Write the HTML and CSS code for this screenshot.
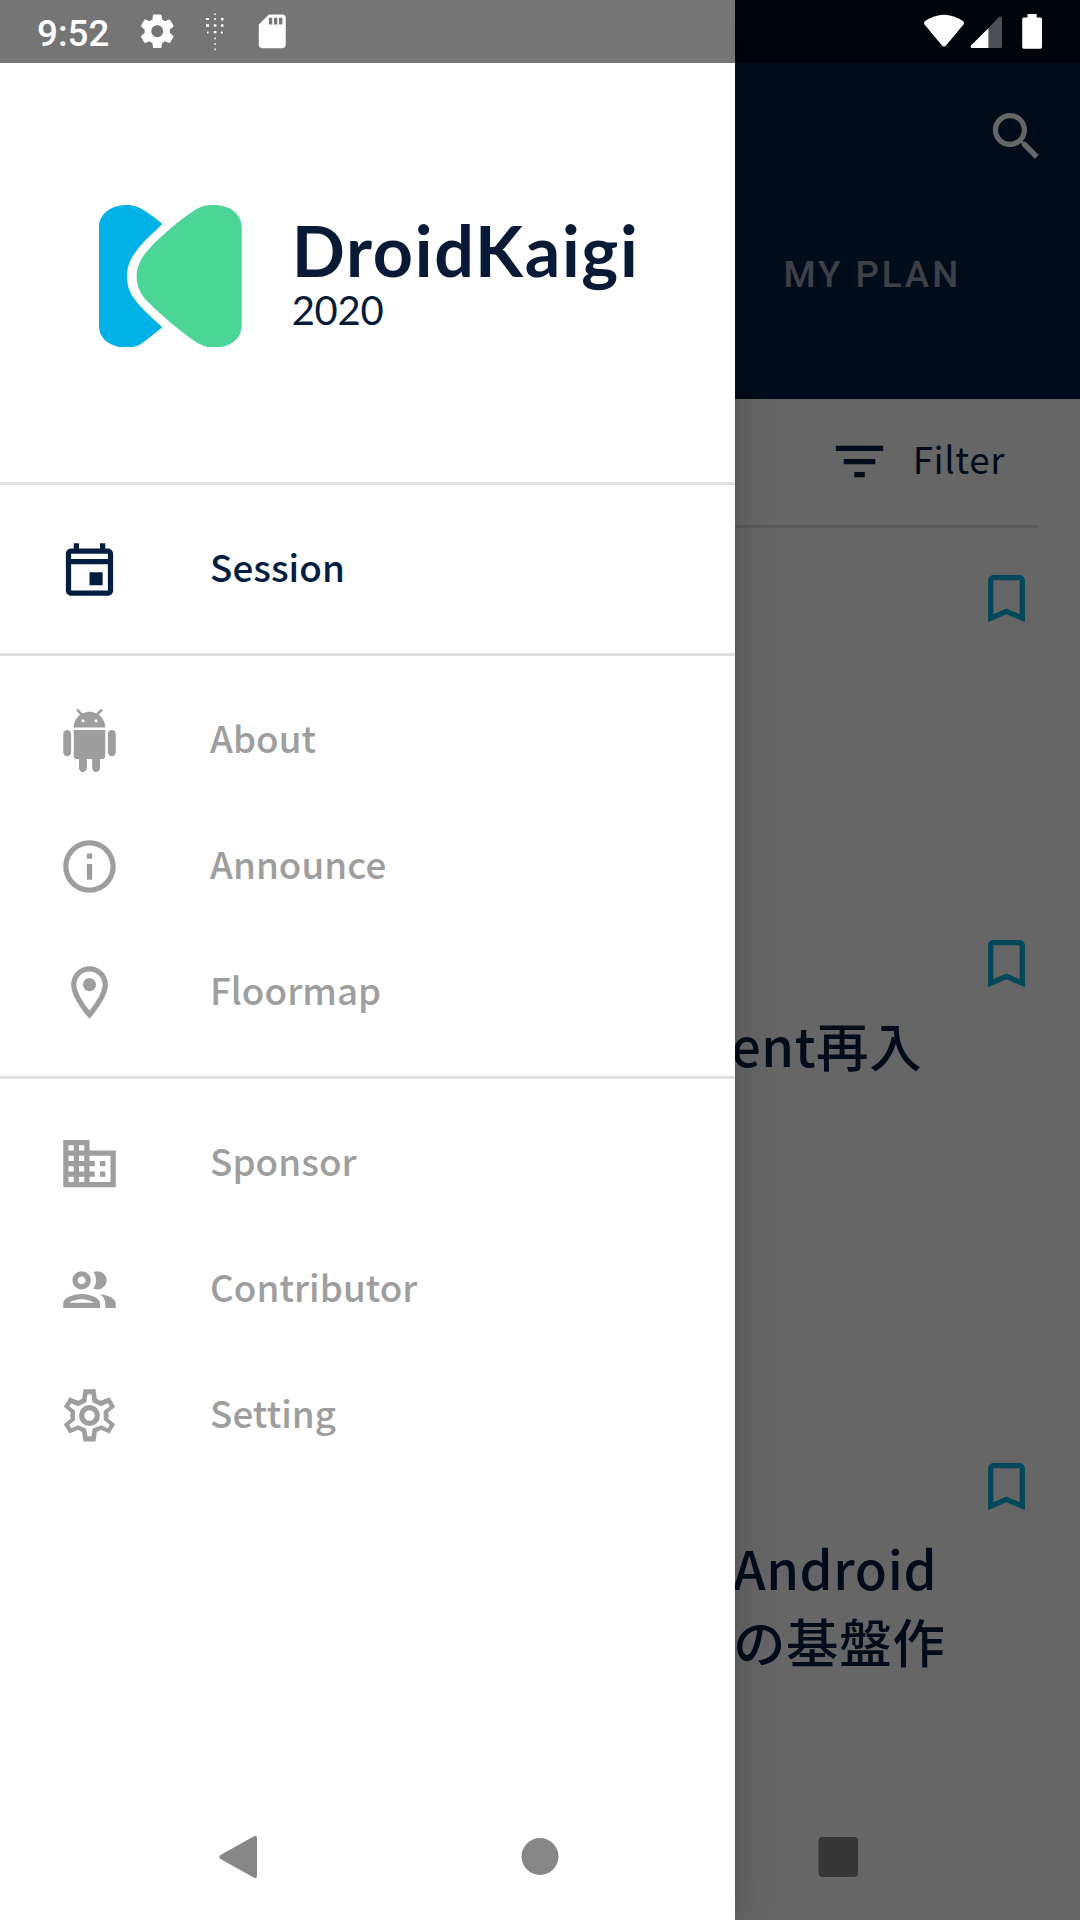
FILE: index.html
```html
<!DOCTYPE html>
<html lang="ja">
<head>
<meta charset="utf-8">
<title>DroidKaigi 2020</title>
<link rel="stylesheet" href="styles.css">
</head>
<body>
<div class="screen">
  <main class="app">
    <header class="appbar">
      <div class="toolbar">
        <svg class="icon" viewBox="0 0 24 24"><path d="M15.5 14h-.79l-.28-.27C15.41 12.59 16 11.11 16 9.5 16 5.91 13.09 3 9.5 3S3 5.91 3 9.5 5.91 16 9.5 16c1.61 0 3.09-.59 4.23-1.57l.27.28v.79l5 4.99L20.49 19l-4.99-5zm-6 0C7.01 14 5 11.99 5 9.5S7.01 5 9.5 5 14 7.01 14 9.5 11.99 14 9.5 14z"/></svg>
      </div>
      <div class="tabs"><span class="tab">MY PLAN</span></div>
    </header>
    <div class="filter-row">
      <svg class="icon" viewBox="0 0 24 24"><path d="M10 18h4v-2h-4v2zM3 6v2h18V6H3zm3 7h12v-2H6v2z"/></svg>
      <span class="filter-label">Filter</span>
    </div>
    <section class="session session-first">
      <svg class="icon bookmark" viewBox="0 0 24 24"><path d="M17 3H7c-1.1 0-2 .9-2 2v16l7-3 7 3V5c0-1.1-.9-2-2-2zm0 15l-5-2.18L7 18V5h10v13z"/></svg>
    </section>
    <section class="session session-second">
      <svg class="icon bookmark" viewBox="0 0 24 24"><path d="M17 3H7c-1.1 0-2 .9-2 2v16l7-3 7 3V5c0-1.1-.9-2-2-2zm0 15l-5-2.18L7 18V5h10v13z"/></svg>
      <h2 class="title title-fragment">ent再入</h2>
    </section>
    <section class="session">
      <svg class="icon bookmark" viewBox="0 0 24 24"><path d="M17 3H7c-1.1 0-2 .9-2 2v16l7-3 7 3V5c0-1.1-.9-2-2-2zm0 15l-5-2.18L7 18V5h10v13z"/></svg>
      <h2 class="title">Android<br>の基盤作</h2>
    </section>
  </main>

  <div class="scrim"></div>

  <aside class="drawer">
    <div class="brand">
      <svg class="mark" viewBox="57 44 428 428">
        <path fill="#02b1e5" d="M57 110C57 70 95 44 138 44C165 44 180 52 195 62C215 75 230 87 247 101C220 128 195 148 172 178C150 205 141 230 141 258C141 290 150 310 170 335C190 360 220 385 247 411C230 425 212 440 195 452C180 464 165 472 138 472C95 472 57 448 57 408Z"/>
        <path fill="#4bd697" d="M402 44C450 44 485 72 485 110V406C485 445 450 472 402 472C375 472 360 463 340 450C300 422 240 372 202 333C180 310 170 288 170 258C170 230 182 205 200 184C235 142 300 88 345 59C362 48 378 44 402 44Z"/>
      </svg>
      <div class="brand-text">
        <span class="brand-name">DroidKaigi</span>
        <span class="brand-year">2020</span>
      </div>
    </div>
    <nav>
      <ul class="group">
        <li class="item item-active">
          <svg class="icon" viewBox="0 0 24 24"><path fill-rule="evenodd" d="M6 2h2v2h8V2h2v2h1c1.1 0 2 .9 2 2v14c0 1.100-.9 2-2 2H5c-1.100 0-2-.9-2-2V6c0-1.100.9-2 2-2h1zM5 6v2h14V6zM5 10v10h14V10zM12 13h5v5h-5z"/></svg>
          <span class="label">Session</span>
        </li>
      </ul>
      <ul class="group">
        <li class="item">
          <svg class="icon" viewBox="0 0 24 24"><path d="M6 18c0 .55.45 1 1 1h1v3.5c0 .83.67 1.5 1.5 1.5s1.5-.67 1.5-1.5V19h2v3.5c0 .83.67 1.5 1.5 1.5s1.5-.67 1.5-1.5V19h1c.55 0 1-.45 1-1V8H6v10zM3.5 8C2.670 8 2 8.670 2 9.500v7c0 .83.67 1.500 1.500 1.500S5 17.330 5 16.500v-7C5 8.670 4.330 8 3.500 8zm17 0c-.83 0-1.500.67-1.500 1.500v7c0 .83.67 1.500 1.500 1.500s1.500-.67 1.500-1.500v-7c0-.83-.67-1.500-1.500-1.500zm-4.970-5.840l1.300-1.300c.2-.2.2-.51 0-.71-.2-.2-.51-.2-.71 0l-1.480 1.480C13.850 1.230 12.950 1 12 1c-.96 0-1.860.23-2.660.63L7.850.15c-.2-.2-.51-.2-.71 0-.2.2-.2.51 0 .71l1.310 1.310C6.970 3.260 6 5.010 6 7h12c0-1.990-.97-3.750-2.470-4.840zM10 5H9V4h1v1zm5 0h-1V4h1v1z"/></svg>
          <span class="label">About</span>
        </li>
        <li class="item">
          <svg class="icon" viewBox="0 0 24 24"><path d="M11 7h2v2h-2zm0 4h2v6h-2zm1-9C6.480 2 2 6.480 2 12s4.480 10 10 10 10-4.480 10-10S17.520 2 12 2zm0 18c-4.410 0-8-3.590-8-8s3.590-8 8-8 8 3.590 8 8-3.590 8-8 8z"/></svg>
          <span class="label">Announce</span>
        </li>
        <li class="item">
          <svg class="icon" viewBox="0 0 24 24"><path d="M12 2C8.130 2 5 5.130 5 9c0 5.250 7 13 7 13s7-7.750 7-13c0-3.870-3.130-7-7-7zM7 9c0-2.760 2.240-5 5-5s5 2.240 5 5c0 2.880-2.880 7.190-5 9.880C9.920 16.210 7 11.850 7 9z"/><circle cx="12" cy="9" r="2.500"/></svg>
          <span class="label">Floormap</span>
        </li>
      </ul>
      <ul class="group">
        <li class="item">
          <svg class="icon" viewBox="0 0 24 24"><path d="M12 7V3H2v18h20V7H12zM6 19H4v-2h2v2zm0-4H4v-2h2v2zm0-4H4V9h2v2zm0-4H4V5h2v2zm4 12H8v-2h2v2zm0-4H8v-2h2v2zm0-4H8V9h2v2zm0-4H8V5h2v2zm10 12h-8v-2h2v-2h-2v-2h2v-2h-2V9h8v10zm-2-8h-2v2h2v-2zm0 4h-2v2h2v-2z"/></svg>
          <span class="label">Sponsor</span>
        </li>
        <li class="item">
          <svg class="icon" viewBox="0 0 24 24"><path d="M9 13.750c-2.340 0-7 1.170-7 3.500V19h14v-1.750c0-2.330-4.660-3.500-7-3.500zM4.340 17c.84-.58 2.870-1.250 4.660-1.250s3.820.67 4.660 1.250H4.340zM9 12c1.930 0 3.500-1.570 3.500-3.500S10.930 5 9 5 5.500 6.570 5.500 8.500 7.070 12 9 12zm0-5c.83 0 1.500.67 1.500 1.500S9.830 10 9 10s-1.500-.67-1.500-1.500S8.170 7 9 7zm7.040 6.810c1.160.84 1.960 1.960 1.960 3.440V19h4v-1.750c0-2.020-3.500-3.170-5.960-3.440zM15 12c1.930 0 3.500-1.570 3.500-3.500S16.930 5 15 5c-.54 0-1.040.13-1.500.35.63.89 1 1.980 1 3.150s-.37 2.260-1 3.150c.46.22.96.35 1.500.35z"/></svg>
          <span class="label">Contributor</span>
        </li>
        <li class="item">
          <svg class="icon" viewBox="53.500 791.500 189 189"><path fill-rule="evenodd" d="M130 807H166L170 836L182 842L208 831L225 860L204 877L206 886L204 895L225 912L208 940L182 929L170 936L166 964H130L126 936L114 929L88 940L71 912L92 895L90 886L92 877L71 860L88 831L114 842L126 836ZM142 822L138 846L114 858L93 849L87 858L105 872L104 886L105 900L87 914L93 924L114 915L138 926L142 948H154L157 926L182 915L203 924L209 914L191 900L190 886L191 872L209 858L203 849L182 858L157 846L154 822Z"/><circle cx="148" cy="886" r="23.500" fill="none" stroke="currentColor" stroke-width="16"/></svg>
          <span class="label">Setting</span>
        </li>
      </ul>
    </nav>
  </aside>

  <div class="statusbar">
    <div class="status-left">
      <span class="clock">9:52</span>
      <svg class="gear" viewBox="0 0 24 24"><path d="M19.430 12.980c.04-.32.07-.64.07-.98s-.03-.66-.07-.98l2.110-1.650c.19-.15.24-.42.12-.64l-2-3.460c-.12-.22-.39-.3-.61-.22l-2.490 1c-.52-.4-1.080-.73-1.690-.98l-.38-2.650C14.460 2.180 14.250 2 14 2h-4c-.25 0-.46.18-.49.42l-.38 2.650c-.61.25-1.170.59-1.690.98l-2.490-1c-.23-.09-.49 0-.61.22l-2 3.460c-.13.22-.07.49.12.64l2.110 1.650c-.04.32-.07.65-.07.98s.03.66.07.98l-2.110 1.650c-.19.15-.24.42-.12.64l2 3.460c.12.22.39.3.61.22l2.490-1c.52.4 1.080.73 1.690.98l.38 2.650c.03.24.24.42.49.42h4c.25 0 .46-.18.49-.42l.38-2.650c.61-.25 1.170-.59 1.690-.98l2.490 1c.23.09.49 0 .61-.22l2-3.460c.12-.22.07-.49-.12-.64l-2.110-1.650zM12 15.500c-1.930 0-3.500-1.570-3.500-3.500s1.570-3.500 3.500-3.500 3.500 1.570 3.500 3.500-1.570 3.500-3.500 3.500z"/></svg>
      <svg class="dots" viewBox="0 0 20 40"><path d="M9.300 1.500h1.500v1.500h-1.500zM1 6h3v2h-3zM9.300 6h1.500v2h-1.500zM16 6h2.500v2.500h-2.500zM1 12.300h3v2.500h-3zM8.800 12.300h2.600v2.500h-2.600zM16 12.300h2.500v2.500h-2.500zM2 19.500h1.500v2h-1.500zM8.800 19h2.600v2.300h-2.600zM15.800 19.500h2v2h-2zM9.300 25.500h1.500v1.800h-1.500zM9.300 31h1.500v1.800h-1.500zM9.300 36.500h1.500v1.800h-1.500z"/></svg>
      <svg class="sdcard" viewBox="0 0 24 24"><path d="M18 2h-8L4.020 8 4 20c0 1.100.9 2 2 2h12c1.100 0 2-.9 2-2V4c0-1.100-.9-2-2-2zm-6 6h-2V4h2v4zm3 0h-2V4h2v4zm3 0h-2V4h2v4z"/></svg>
    </div>
    <svg class="status-right" viewBox="920 0 124 63">
      <path d="M924.500 21.500Q944 8 963.500 21.500Q964.500 23 963.500 24.500L946 45.500Q944 47.800 942 45.500L924.500 24.500Q923.500 23 924.500 21.500Z"/>
      <path d="M988.500 48V28L971 45.500Q970 48 972 48Z"/>
      <path opacity=".3" d="M988.500 28L999 17Q1002 15.500 1002 18V46.500Q1002 48 1000.500 48H988.500Z"/>
      <path d="M1027.500 14H1036.700V17.500H1040.500Q1042 17.500 1042 19V47Q1042 48.800 1040.500 48.800H1023.700Q1022.200 48.800 1022.200 47V19Q1022.200 17.500 1023.700 17.500H1027.500Z"/>
    </svg>
  </div>

  <div class="navbar">
    <svg class="nav-back" viewBox="0 0 38 44"><path d="M35 1.200Q38 0 38 3V41Q38 44 35 42.800L1.500 24Q-1 22 1.500 20Z"/></svg>
    <svg class="nav-home" viewBox="0 0 38 44"><circle cx="19" cy="21.500" r="18.500"/></svg>
    <svg class="nav-recent" viewBox="0 0 40 44"><rect x=".5" y="2" width="39.500" height="40" rx="4"/></svg>
  </div>
</div>
</body>
</html>
```

FILE: styles.css
```css
* { box-sizing: border-box; }
body { margin: 0; }
.screen {
  position: relative;
  width: 1080px;
  height: 1920px;
  overflow: hidden;
  background: #fff;
  font-family: "Noto Sans CJK JP", sans-serif;
}
svg { display: block; fill: currentColor; flex: none; }
.icon { width: 63px; height: 63px; }

/* Session list behind the drawer */
.app { color: #041e42; }
.appbar {
  height: 399px;
  padding-top: 105px;
  background: #041e42;
  color: #fff;
}
.toolbar { display: flex; justify-content: flex-end; padding-right: 31.600px; }
.tabs { display: flex; padding: 85px 0 0 783.500px; }
.tab {
  font: 500 36.750px/43px Roboto, sans-serif;
  letter-spacing: 2.900px;
  color: rgba(255, 255, 255, .6);
}
.filter-row {
  display: flex;
  align-items: center;
  justify-content: flex-end;
  width: 1038px;
  height: 129px;
  padding: 0 33px 2px 0;
  gap: 22px;
  border-bottom: 3px solid #e0e0e0;
}
.filter-label { font-size: 36.750px; line-height: 54px; padding-bottom: 7px; letter-spacing: .600px; }
.session { height: 522px; padding-top: 39px; }
.session-first { height: 365px; }
.session-second { height: 523px; }
.bookmark { margin-left: 975px; color: #00b5e2; }
.title {
  margin: 13px 0 0 733px;
  font-size: 52.500px;
  line-height: 73px;
  font-weight: 500;
  letter-spacing: .600px;
  white-space: nowrap;
}
.title-fragment { margin-left: 731px; }
.scrim { position: absolute; inset: 0; background: rgba(0, 0, 0, .6); }

/* Navigation drawer */
.drawer {
  position: absolute;
  inset: 0 auto 0 0;
  width: 735px;
  background: #fff;
  box-shadow: 0 0 40px rgba(0, 0, 0, .2);
}
.brand {
  display: flex;
  height: 482px;
  padding: 204.500px 0 0 99px;
  gap: 50px;
  color: #081a36;
}
.mark { width: 142.700px; height: 142.700px; }
.brand-text { display: flex; flex-direction: column; padding-top: 9px; font-family: Lato, sans-serif; }
.brand-name { font-size: 70px; line-height: 72px; font-weight: 700; letter-spacing: 1.700px; }
.brand-year { font-size: 40px; line-height: 48px; letter-spacing: -.300px; }
.group {
  margin: 0;
  padding: 21px 0;
  list-style: none;
  border-top: 3px solid #e0e0e0;
}
.item {
  display: flex;
  align-items: center;
  height: 126px;
  padding-left: 57.750px;
  gap: 89.250px;
  color: #9e9e9e;
}
.item-active { color: #041e42; }
.label { font-size: 36.750px; line-height: 54px; padding-bottom: 7px; font-weight: 500; letter-spacing: .050px; }

/* System bars */
.statusbar {
  position: absolute;
  inset: 0 0 auto 0;
  display: flex;
  justify-content: space-between;
  height: 63px;
  padding: 0 36px 0 37px;
  background: rgba(0, 0, 0, .54);
  color: #fff;
}
.status-left { display: flex; align-items: center; }
.clock { width: 99.500px; padding-top: 3px; font: 500 36.750px/43px Roboto, sans-serif; }
.gear, .sdcard { width: 40.500px; height: 40.500px; }
.dots { width: 20px; height: 40px; margin: 0 27px 0 28px; }
.status-right { width: 124px; height: 63px; }
.navbar {
  position: absolute;
  inset: auto 0 0 0;
  display: flex;
  align-items: center;
  height: 126px;
  padding-left: 219px;
  color: rgba(0, 0, 0, .47);
}
.navbar svg { height: 44px; }
.nav-back { width: 38px; }
.nav-home { width: 38px; margin: 0 259.500px 0 263.500px; }
.nav-recent { width: 40px; }
```
